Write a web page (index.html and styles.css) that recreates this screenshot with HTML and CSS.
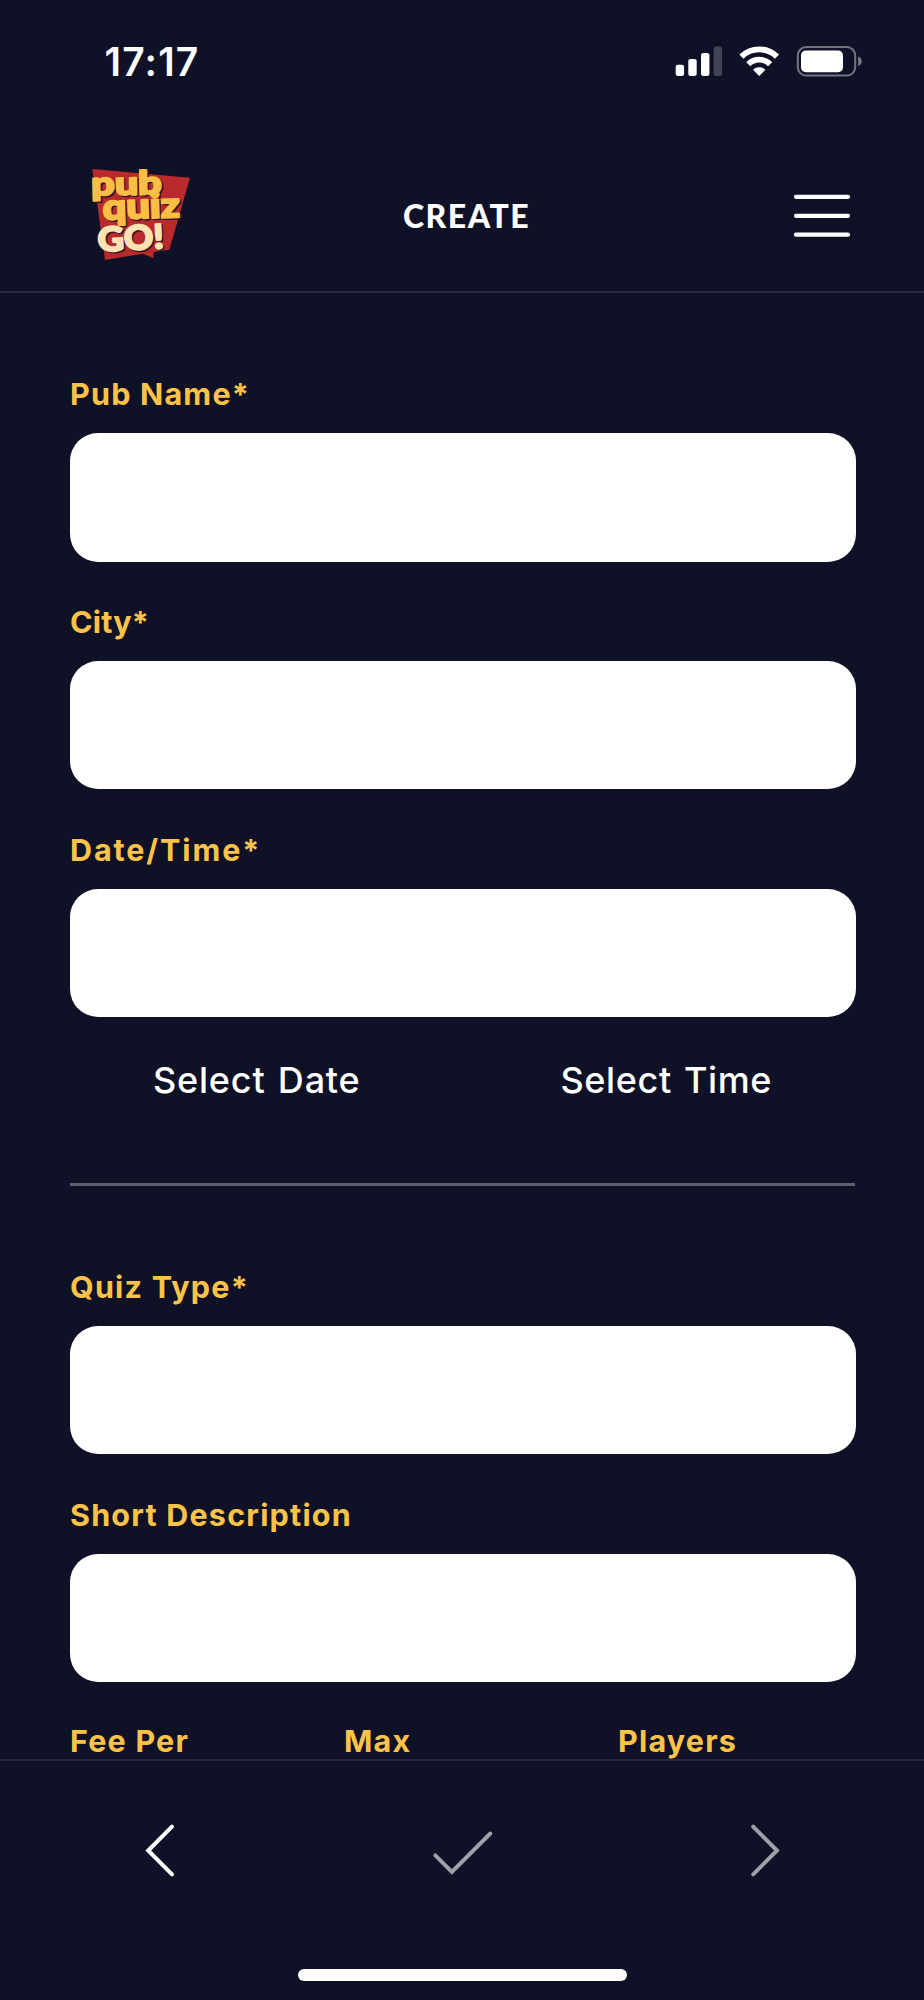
FILE: index.html
```html
<!DOCTYPE html>
<html lang="en">
<head>
    <meta charset="UTF-8">
    <title>Pub Quiz Go - Create</title>
    <link rel="stylesheet" href="styles.css">
</head>
<body>
    <div class="status-bar">
        <span class="clock">17:17</span>
        <svg class="status-icons" width="190" height="34" viewBox="674 44 190 34">
            <!-- signal -->
            <g fill="#fff">
                <rect x="675.7" y="64.7" width="8.4" height="11.3" rx="2.3"/>
                <rect x="688.3" y="59" width="8.4" height="17" rx="2.3"/>
                <rect x="701" y="53" width="8.4" height="23" rx="2.3"/>
                <rect x="713.7" y="46.6" width="8.4" height="29.4" rx="2.3" opacity="0.22"/>
            </g>
            <!-- wifi -->
            <g fill="none" stroke="#fff" stroke-width="5.8">
                <path d="M741.4 56.6a25.4 25.4 0 0 1 35.6 0"/>
                <path d="M748.3 64.2a15.2 15.2 0 0 1 21.8 0"/>
            </g>
            <path fill="#fff" d="M753 69.8a9 9 0 0 1 12.4 0L759.2 76z"/>
            <!-- battery -->
            <rect x="797.8" y="47" width="57.4" height="28.6" rx="8.5" fill="none" stroke="#fff" stroke-width="2" opacity="0.42"/>
            <rect x="801" y="50.6" width="42" height="21.6" rx="4.8" fill="#fff"/>
            <path fill="#fff" opacity="0.45" d="M858.2 56.5c4.6 1.8 4.6 7.8 0 9.6z"/>
        </svg>
    </div>

    <header class="header">
        <svg class="logo" width="140" height="130" viewBox="0 0 420 390">
            <path fill="#ba2a2c" d="M67 57L360 83 298 299 251 306 250 325 219 311 105 330z"/>
            <g class="logo-shadow">
                <text x="68" y="140" font-size="98" textLength="212" lengthAdjust="spacingAndGlyphs" transform="rotate(-1 68 140)">pub</text>
                <text x="103" y="213" font-size="106" textLength="232" lengthAdjust="spacingAndGlyphs" transform="rotate(-2 103 213)">quiz</text>
                <text x="89" y="309" font-size="101" textLength="198" lengthAdjust="spacingAndGlyphs" transform="rotate(-3 89 309)">GO!</text>
            </g>
            <g class="logo-text">
                <text x="64" y="136" font-size="98" textLength="212" lengthAdjust="spacingAndGlyphs" transform="rotate(-1 64 136)">pub</text>
                <text x="99" y="209" font-size="106" textLength="232" lengthAdjust="spacingAndGlyphs" transform="rotate(-2 99 209)">quiz</text>
                <text class="logo-go" x="85" y="305" font-size="101" textLength="198" lengthAdjust="spacingAndGlyphs" transform="rotate(-3 85 305)">GO!</text>
            </g>
        </svg>
        <h1>CREATE</h1>
        <svg class="menu" width="60" height="48" viewBox="792 192 60 48">
            <path fill="none" stroke="#fff" stroke-width="4.2" stroke-linecap="round" d="M796 196.8h52M796 215.8h52M796 234.7h52"/>
        </svg>
    </header>

    <main class="form">
        <label for="pubName">Pub Name*</label>
        <input type="text" id="pubName">
        <label for="city" class="tight">City*</label>
        <input type="text" id="city">
        <label for="dateTime" class="wide">Date/Time*</label>
        <input type="text" id="dateTime">
        <div class="pickers">
            <button type="button">Select Date</button>
            <button type="button">Select Time</button>
        </div>
        <hr>
        <label for="quizType">Quiz Type*</label>
        <input type="text" id="quizType">
        <label for="description">Short Description</label>
        <input type="text" id="description">
        <div class="columns">
            <label>Fee Per</label>
            <label>Max</label>
            <label>Players</label>
        </div>
    </main>

    <footer class="footer">
        <div class="nav">
            <svg width="32" height="56" viewBox="144 1822 32 56"><path d="M172 1826.7L148.2 1850.5 172 1874.3"/></svg>
            <svg class="off" width="64" height="56" viewBox="432 1822 64 56"><path d="M436.3 1855.3L452.9 1871.9 491.3 1833.5"/></svg>
            <svg class="off" width="32" height="56" viewBox="749 1822 32 56"><path d="M753.2 1826.7L777 1850.5 753.2 1874.3"/></svg>
        </div>
        <div class="home-bar"></div>
    </footer>
</body>
</html>
```
FILE: styles.css
```css
* {
    box-sizing: border-box;
}
body {
    display: flex;
    flex-direction: column;
    width: 924px;
    height: 2000px;
    margin: 0;
    overflow: hidden;
    background-color: #0f1126;
    color: #fff;
    font-family: Inter, "Open Sans", sans-serif;
}
svg {
    display: block;
    flex: none;
}
.status-bar {
    display: flex;
    justify-content: space-between;
    height: 150px;
    padding: 44px 60px 0 104.5px;
}
.clock {
    font-size: 39px;
    font-weight: 600;
    line-height: 36px;
    letter-spacing: 1.2px;
}
.header {
    display: flex;
    height: 143px;
    padding: 0 72px 0 70px;
    border-bottom: 2px solid #292a3d;
}
.header h1 {
    margin: 46px 0 0 193px;
    font-family: Lato, sans-serif;
    font-size: 32px;
    font-weight: 900;
    line-height: 40px;
    letter-spacing: 1.5px;
}
.menu {
    margin: 42px 0 0 auto;
}
.logo text {
    font-family: Lato, sans-serif;
    font-weight: 900;
    stroke-width: 6;
    stroke-linejoin: round;
}
.logo-text {
    fill: #f9bf45;
    stroke: #f9bf45;
}
.logo-shadow {
    fill: #33151f;
    stroke: #33151f;
}
.logo .logo-go {
    fill: #fde3b3;
    stroke: #fde3b3;
}

/* form */
.form {
    height: 1466px;
    padding: 82px 68px 0 69.5px;
}
label {
    display: block;
    height: 58px;
    padding-left: 0.5px;
    color: #fcc348;
    font-size: 30.5px;
    font-weight: 700;
    line-height: 38px;
    letter-spacing: 1.2px;
    white-space: nowrap;
}
label.tight {
    letter-spacing: 0.2px;
}
label.wide {
    letter-spacing: 1.9px;
}
input[type="text"] {
    display: block;
    width: 786.5px;
    height: 128.5px;
    margin: 0 0 41.3px;
    border: none;
    border-radius: 28px;
    background-color: #fff;
}
.pickers {
    display: flex;
    height: 125px;
    padding-left: 83.5px;
}
.pickers button {
    flex: none;
    width: 407.5px;
    height: 44px;
    padding: 0;
    border: none;
    background: none;
    color: #fff;
    font-family: Inter, sans-serif;
    font-size: 36px;
    font-weight: 500;
    text-align: left;
    letter-spacing: 0.8px;
    word-spacing: 2px;
}
.pickers button:last-child {
    width: 220px;
    letter-spacing: 0.6px;
}
hr {
    width: 785px;
    height: 3px;
    margin: 0 0 81.4px;
    border: none;
    background-color: #5e5f6e;
}
.columns {
    display: grid;
    grid-template-columns: 274px 274px 1fr;
}
.columns label {
    height: 36px;
    line-height: 36px;
}

/* footer */
.footer {
    flex: 1;
    border-top: 2px solid #292a3d;
}
.nav {
    display: flex;
    justify-content: space-between;
    height: 208px;
    padding: 61px 143px 0 144px;
}
.nav path {
    fill: none;
    stroke: #fff;
    stroke-width: 4;
    stroke-linecap: round;
}
.nav .off path {
    stroke: #9f9fa8;
}
.home-bar {
    width: 329px;
    height: 12px;
    margin-left: 298px;
    border-radius: 6px;
    background-color: #fff;
}
```
